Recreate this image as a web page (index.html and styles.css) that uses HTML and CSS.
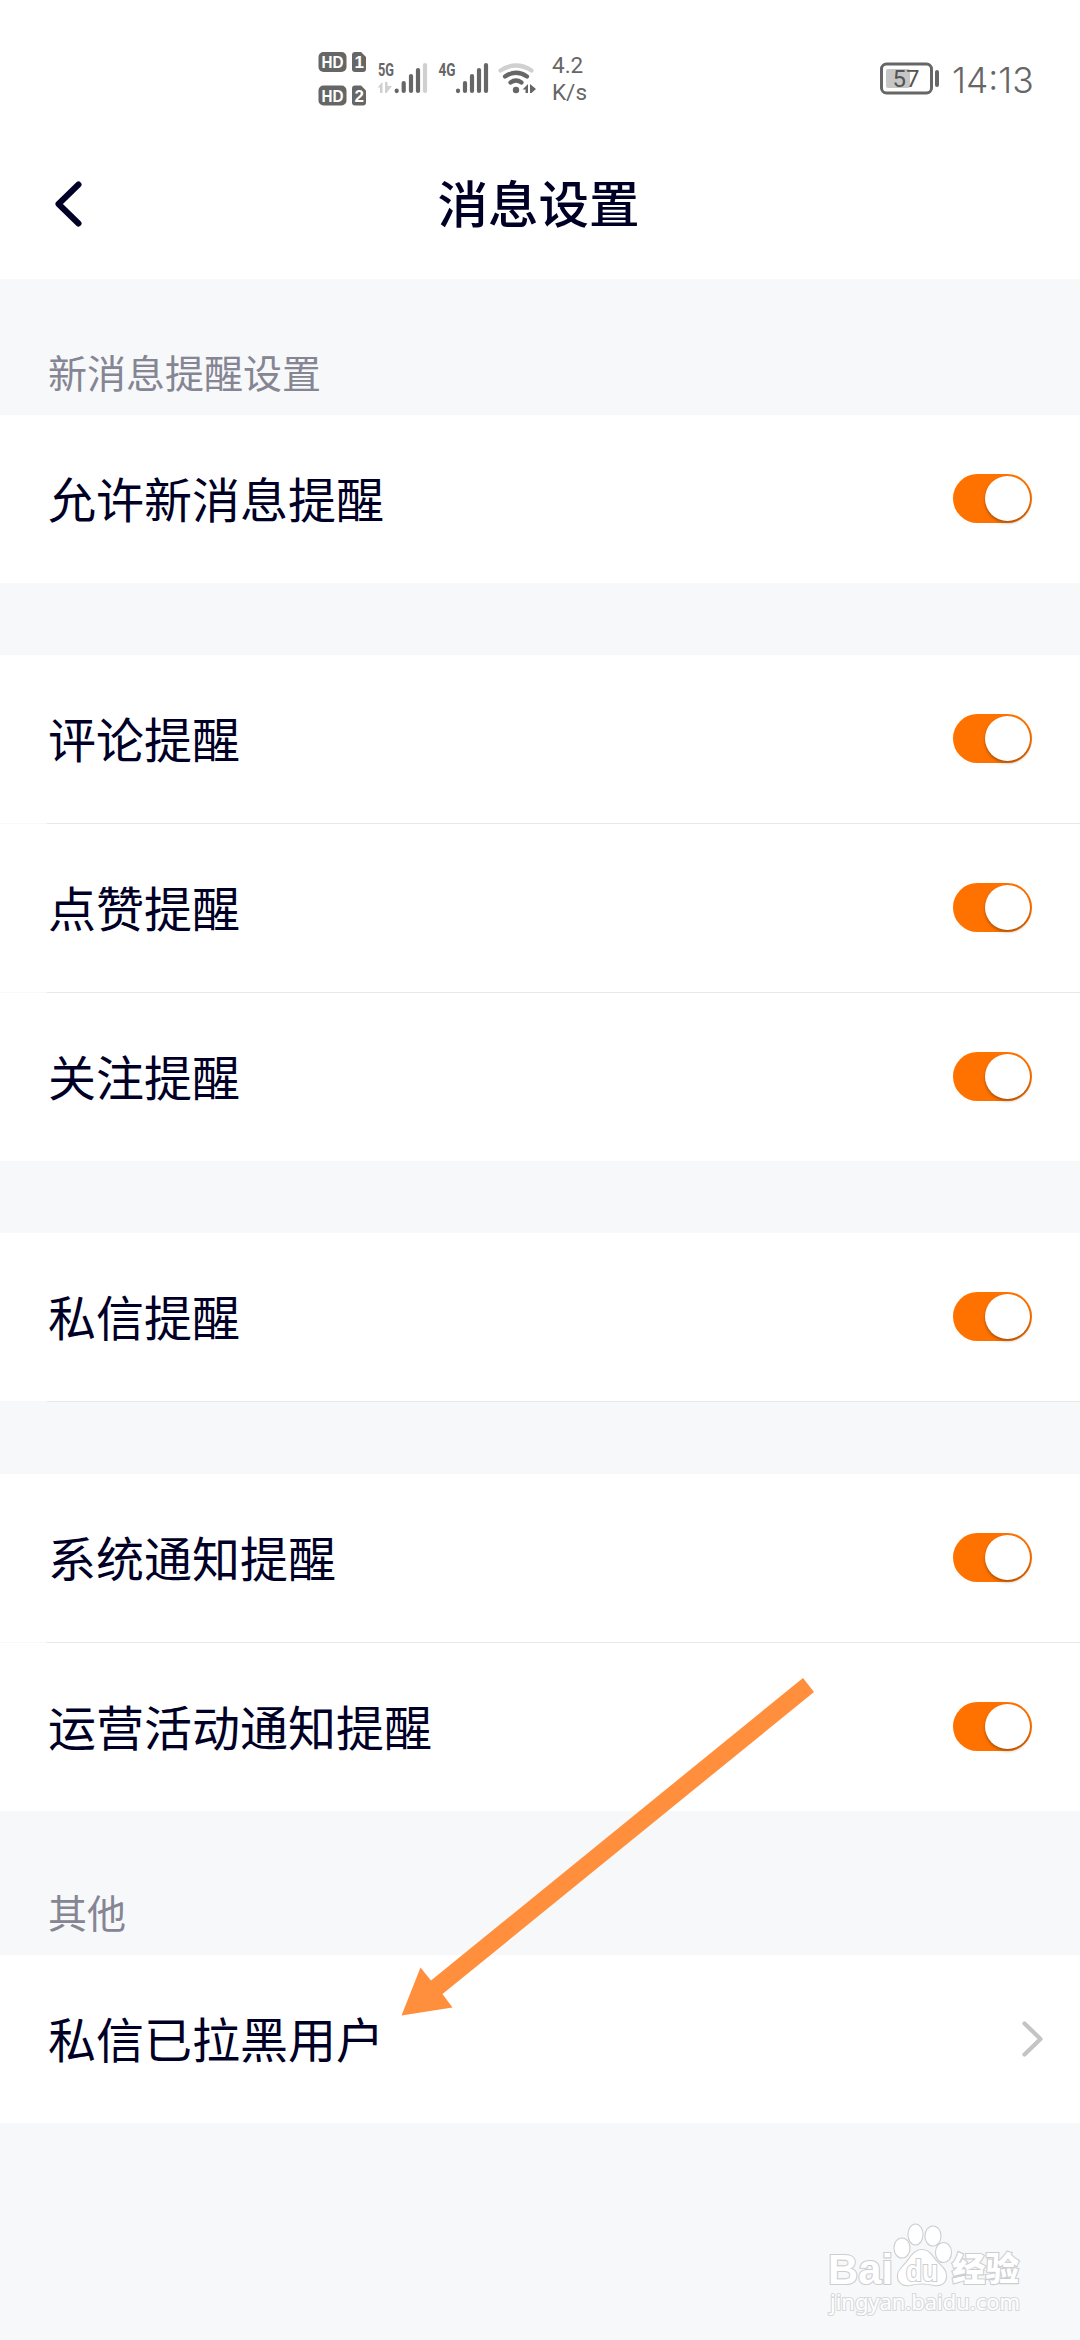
FILE: index.html
```html
<!DOCTYPE html>
<html lang="zh-CN">
<head>
<meta charset="utf-8">
<title>消息设置</title>
<link rel="stylesheet" href="styles.css">
</head>
<body>
<main class="screen">
  <header class="top">
    <div class="status">
      <svg class="status-icons" width="240" height="80" viewBox="300 40 240 80">
        <g fill="#666">
          <rect x="318.500" y="52" width="28" height="20" rx="5"/>
          <path d="M355 52h6l5 5v12q0 3-3 3h-8q-3 0-3-3V55q0-3 3-3z"/>
          <rect x="318.500" y="85.500" width="28" height="20" rx="5"/>
          <path d="M355 85.500h6l5 5v12q0 3-3 3h-8q-3 0-3-3v-14q0-3 3-3z"/>
        </g>
        <g class="badge-text">
          <text x="321.500" y="68.200" textLength="22" lengthAdjust="spacingAndGlyphs">HD</text><text x="354.500" y="68.200">1</text>
          <text x="321.500" y="101.700" textLength="22" lengthAdjust="spacingAndGlyphs">HD</text><text x="354.500" y="101.700">2</text>
        </g>
        <g class="net-text">
          <text x="378" y="76" textLength="16" lengthAdjust="spacingAndGlyphs">5G</text>
          <text x="438.500" y="76" textLength="17" lengthAdjust="spacingAndGlyphs">4G</text>
        </g>
        <g stroke="#666" stroke-width="4.200" stroke-linecap="round">
          <path d="M396.700 90.500v.6M403.700 83v8M411 76v15M418 70v21"/>
          <path d="M458 90.500v.6M465 83v8M472 76v15M479 70v21M486 65v26"/>
          <path d="M425 65v26" stroke="#d0d0d0"/>
        </g>
        <path fill="#d0d0d0" d="M377.500 87.500l5-5.500v11h-2.500v-5.500zM385 82h2.500v4h4.500l-5.500 7H385z"/>
        <g fill="none" stroke="#666" stroke-width="4.200" stroke-linecap="round">
          <path d="M500.500 70.500q15.500-10 31 0" stroke="#d0d0d0"/>
          <path d="M505 76.500q11-7.500 22 0M510.500 82.500q5.500-4 11 0"/>
        </g>
        <circle cx="516" cy="90" r="3.200" fill="#666"/>
        <path fill="#666" d="M522.500 89.500l5.500-5.500v9h-2.500v-3.500zM530 84l6 5-4.500 4H530z"/>
      </svg>
      <div class="speed"><span>4.2</span><span>K/s</span></div>
      <svg class="battery" width="62" height="34" viewBox="0 0 62 34">
        <rect x="1.500" y="2" width="50" height="29" rx="5" fill="none" stroke="#666" stroke-width="3"/>
        <rect x="6" y="7" width="24" height="19" rx="2" fill="#c6c6c6"/>
        <rect x="55" y="8" width="4" height="17" rx="2" fill="#666"/>
        <text class="level" x="26" y="25">57</text>
      </svg>
      <time class="clock">14:13</time>
    </div>
    <nav class="nav">
      <svg class="back" width="36" height="60" viewBox="0 0 36 60"><path d="M28.500 10.500L8.500 30l20 19.500" fill="none" stroke="#000027" stroke-width="6" stroke-linecap="round" stroke-linejoin="round"/></svg>
      <h1>消息设置</h1>
    </nav>
  </header>
  <h2 class="caption">新消息提醒设置</h2>
  <section class="group">
    <div class="row">允许新消息提醒<i class="switch"></i></div>
  </section>
  <section class="group">
    <div class="row">评论提醒<i class="switch"></i></div>
    <div class="row">点赞提醒<i class="switch"></i></div>
    <div class="row">关注提醒<i class="switch"></i></div>
  </section>
  <section class="group private">
    <div class="row">私信提醒<i class="switch"></i></div>
  </section>
  <section class="group">
    <div class="row">系统通知提醒<i class="switch"></i></div>
    <div class="row">运营活动通知提醒<i class="switch"></i></div>
  </section>
  <h2 class="caption other">其他</h2>
  <section class="group">
    <div class="row">私信已拉黑用户
      <svg class="more" width="24" height="40" viewBox="0 0 24 40"><path d="M3.500 4.500L19.500 20l-16 15.500" fill="none" stroke="#c4c4c4" stroke-width="4.200" stroke-linecap="round" stroke-linejoin="round"/></svg>
    </div>
  </section>

  <svg class="arrow" width="420" height="346" viewBox="400 1672 420 346"><path fill="#ff8f3c" d="M803 1678l11 14-371.500 302 10 13.500-51 8 19-48 10.500 13z"/></svg>

  <svg class="watermark" width="210" height="105" viewBox="820 2215 210 105">
    <g fill="#fff" stroke="#cdced0" stroke-width="2.200" paint-order="stroke">
      <text class="wm-latin" x="828" y="2283.500" textLength="65" lengthAdjust="spacingAndGlyphs">Bai</text>
      <ellipse cx="902" cy="2248" rx="7.500" ry="9.500"/>
      <ellipse cx="915.500" cy="2234.500" rx="7" ry="10"/>
      <ellipse cx="933" cy="2236" rx="7.500" ry="9.500"/>
      <ellipse cx="943.500" cy="2252.500" rx="7.500" ry="9.500"/>
      <path d="M922 2250c8 0 10 7 15 12s9 8 9 14c0 8-7 10-12 9-8-2-16-2-24 0-6 1-12-2-12-9 0-6 5-9 9-14s7-12 15-12z"/>
      <text class="wm-du" x="906" y="2280.500" textLength="32" lengthAdjust="spacingAndGlyphs">du</text>
      <text class="wm-cn" x="952" y="2281" textLength="67" lengthAdjust="spacingAndGlyphs">经验</text>
      <text class="wm-url" x="830" y="2310" textLength="190" lengthAdjust="spacingAndGlyphs" stroke="#d8d9db">jingyan.baidu.com</text>
    </g>
  </svg>
</main>
</body>
</html>
```
FILE: styles.css
```css
* { box-sizing: border-box; }
body { margin: 0; }
.screen {
  position: relative;
  width: 1080px;
  height: 2340px;
  overflow: hidden;
  background: #f7f8fa;
  color: #000027;
  font-family: "Noto Sans CJK SC", sans-serif;
}
.top { height: 279px; background: #fff; }
.status {
  display: flex;
  height: 150px;
  padding: 40px 42px 0 300px;
  color: #666;
  font-family: Roboto, sans-serif;
}
.speed {
  display: flex;
  flex-direction: column;
  width: 60px;
  margin: 12px 0 0 12px;
  font-size: 22.500px;
  line-height: 27px;
}
.battery { margin: 22px 0 0 auto; }
.level { fill: #555; font: 24px Roboto, sans-serif; text-anchor: middle; }
.clock { width: 86px; margin: 21px 0 0 10px; font: 350 35.500px/40px Inter, sans-serif; white-space: nowrap; }
.badge-text { fill: #fff; font: 700 17px "Liberation Sans", sans-serif; }
.net-text { fill: #666; font: 700 19px Roboto, sans-serif; }
.nav {
  display: grid;
  grid-template-columns: 100px 1fr 100px;
  align-items: center;
  height: 108px;
}
.back { margin-left: 50px; }
.nav h1 { margin: -6px 3px 0 0; font-size: 50.500px; font-weight: 500; line-height: 72px; text-align: center; }
.caption {
  height: 136px;
  margin: 0;
  padding: 64px 48px 0;
  color: #858593;
  font-size: 39px;
  font-weight: 400;
  line-height: 56px;
}
.caption.other { height: 144px; padding-top: 72px; }
.group { background: #fff; }
.group + .group { margin-top: 72px; }
.group.private { border-bottom: 1px solid; border-image: linear-gradient(90deg, #f7f8fa 48px, #e8e8ea 48px) 1; }
.row {
  display: flex;
  align-items: center;
  justify-content: space-between;
  height: 168px;
  padding: 0 48px 4px;
  font-size: 48px;
}
.row + .row { height: 169px; border-top: 1px solid; border-image: linear-gradient(90deg, #f8f8f8 48px, #e8e8e8 48px) 1; }
.switch {
  display: flex;
  justify-content: flex-end;
  width: 79px;
  height: 49px;
  margin-top: 3px;
  padding: 2px;
  border-radius: 25px;
  background: #ff7200;
}
.switch::before {
  content: "";
  width: 45px;
  height: 45px;
  border-radius: 50%;
  background: #fff;
  box-shadow: 0 2px 3px rgba(80, 40, 0, .45);
}
.more { margin: 4px -13px 0 0; }
.arrow { position: absolute; left: 400px; top: 1672px; }
.watermark { position: absolute; left: 820px; top: 2215px; }
.wm-latin { font: 700 42px "Liberation Sans", sans-serif; }
.wm-du { font: 700 29px "Liberation Sans", sans-serif; }
.wm-cn { font: 900 33px "Noto Sans CJK SC", sans-serif; }
.wm-url { font: 22px "Noto Sans", sans-serif; }
```
